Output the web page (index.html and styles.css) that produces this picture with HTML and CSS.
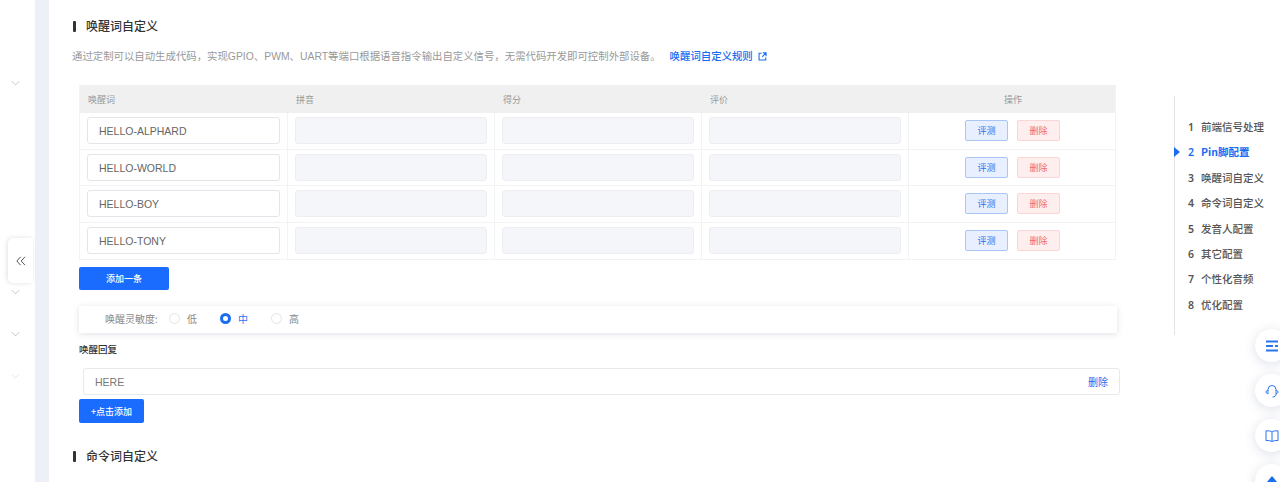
FILE: index.html
```html
<!DOCTYPE html>
<html lang="zh">
<head>
<meta charset="utf-8">
<title>唤醒词自定义</title>
<link rel="stylesheet" href="styles.css">
</head>
<body>
<div class="page">
  <aside class="sidebar">
    <svg class="chev chev-1" viewBox="0 0 8 5"><path d="M.6.8 4 4.2 7.4.8"/></svg>
    <svg class="chev chev-2" viewBox="0 0 8 5"><path d="M.6.8 4 4.2 7.4.8"/></svg>
    <svg class="chev chev-3" viewBox="0 0 8 5"><path d="M.6.8 4 4.2 7.4.8"/></svg>
    <svg class="chev chev-4" viewBox="0 0 8 5"><path d="M.6.8 4 4.2 7.4.8"/></svg>
  </aside>
  <div class="collapse-tab">
    <svg viewBox="0 0 10 10"><path d="M4.6.8.8 5l3.800 4.200M9 .8 5.200 5 9 9.200"/></svg>
  </div>
  <div class="strip"></div>
  <main class="content">
    <h2 class="heading">唤醒词自定义</h2>
    <p class="desc">通过定制可以自动生成代码，实现GPIO、PWM、UART等端口根据语音指令输出自定义信号，无需代码开发即可控制外部设备。<a class="rule-link">唤醒词自定义规则<svg viewBox="0 0 10 10"><path d="M4 1.400H1.200v7.400h7.400V6M5.400 1H9v3.600M9 1 4.600 5.400"/></svg></a></p>
    <div class="table">
      <div class="tr th">
        <div class="td">唤醒词</div><div class="td">拼音</div><div class="td">得分</div><div class="td">评价</div><div class="td ops-head">操作</div>
      </div>
      <div class="tr">
        <div class="td"><div class="input">HELLO-ALPHARD</div></div>
        <div class="td"><div class="input off"></div></div>
        <div class="td"><div class="input off"></div></div>
        <div class="td"><div class="input off"></div></div>
        <div class="td ops"><span class="btn test">评测</span><span class="btn del">删除</span></div>
      </div>
      <div class="tr">
        <div class="td"><div class="input">HELLO-WORLD</div></div>
        <div class="td"><div class="input off"></div></div>
        <div class="td"><div class="input off"></div></div>
        <div class="td"><div class="input off"></div></div>
        <div class="td ops"><span class="btn test">评测</span><span class="btn del">删除</span></div>
      </div>
      <div class="tr">
        <div class="td"><div class="input">HELLO-BOY</div></div>
        <div class="td"><div class="input off"></div></div>
        <div class="td"><div class="input off"></div></div>
        <div class="td"><div class="input off"></div></div>
        <div class="td ops"><span class="btn test">评测</span><span class="btn del">删除</span></div>
      </div>
      <div class="tr">
        <div class="td"><div class="input">HELLO-TONY</div></div>
        <div class="td"><div class="input off"></div></div>
        <div class="td"><div class="input off"></div></div>
        <div class="td"><div class="input off"></div></div>
        <div class="td ops"><span class="btn test">评测</span><span class="btn del">删除</span></div>
      </div>
    </div>
    <button class="primary add-row">添加一条</button>
    <div class="sens">
      <span class="sens-label">唤醒灵敏度:</span>
      <span class="radio"><i class="dot"></i>低</span>
      <span class="radio on"><i class="dot"></i>中</span>
      <span class="radio"><i class="dot"></i>高</span>
    </div>
    <div class="reply-title">唤醒回复</div>
    <div class="reply"><span>HERE</span><a>删除</a></div>
    <button class="primary add-reply">+点击添加</button>
    <h2 class="heading second">命令词自定义</h2>
  </main>
  <nav class="anchors">
    <div class="anchor"><b>1</b>前端信号处理</div>
    <div class="anchor active"><b>2</b>Pin脚配置</div>
    <div class="anchor"><b>3</b>唤醒词自定义</div>
    <div class="anchor"><b>4</b>命令词自定义</div>
    <div class="anchor"><b>5</b>发音人配置</div>
    <div class="anchor"><b>6</b>其它配置</div>
    <div class="anchor"><b>7</b>个性化音频</div>
    <div class="anchor"><b>8</b>优化配置</div>
  </nav>
  <div class="floats">
    <div class="fab"><svg viewBox="0 0 14 14"><path class="thick" d="M1 2.500h12M1 7h7M10 7h3M1 11.500h12"/></svg></div>
    <div class="fab"><svg viewBox="0 0 14 14"><path d="M3 6.500V5.500a4 4 0 0 1 8 0v1M3 6.200C1.600 6.500 1 7.200 1 8s.6 1.500 2 1.800zM11 6.200c1.400.3 2 1 2 1.800s-.6 1.500-2 1.800zM11 10c0 2-1.500 3-3.500 3"/></svg></div>
    <div class="fab"><svg viewBox="0 0 14 14"><path d="M7 3C6 2 4 1.800 1 1.800v9.700c3 0 5 .2 6 1.200 1-1 3-1.200 6-1.200V1.800C10 1.800 8 2 7 3zM7 3v9.700"/></svg></div>
    <div class="fab"><svg viewBox="0 0 14 14"><path class="fill" d="M7 2 12 8H2z"/></svg></div>
  </div>
</div>
</body>
</html>
```
FILE: styles.css
```css
* { box-sizing: border-box; }
html, body { margin: 0; padding: 0; background: #fff; }
body { font-family: "Noto Sans CJK SC", "Liberation Sans", sans-serif; color: #333; }
.page { display: flex; width: 1280px; height: 482px; overflow: hidden; position: relative; background: #fff; }

.sidebar { width: 35px; flex: none; display: flex; flex-direction: column; align-items: center; padding-right: 5px; }
.chev { width: 9px; height: 6px; fill: none; stroke: #b4b8c0; stroke-width: .7; display: block; }
.chev-1 { margin-top: 80px; }
.chev-2 { margin-top: 203px; }
.chev-3 { margin-top: 36px; }
.chev-4 { margin-top: 36px; opacity: .45; }
.collapse-tab { position: absolute; left: 8px; top: 238px; width: 25px; height: 45px; background: #fff; border-radius: 5px 0 0 5px; box-shadow: -1px 0 4px rgba(60, 70, 100, .16); display: flex; align-items: center; justify-content: center; }
.collapse-tab svg { width: 10px; height: 10px; fill: none; stroke: #555; stroke-width: 1; }
.strip { width: 14px; flex: none; background: #eef0f8; }

.content { width: 1125px; flex: none; padding: 0 0 0 24px; }
.heading { margin: 18px 0 0; height: 16px; font-size: 12px; line-height: 16px; font-weight: 500; color: #333; display: flex; align-items: center; }
.heading::before { content: ""; width: 3px; height: 11px; border-radius: 1px; background: #333; margin-right: 10px; }
.heading.second { margin-top: 25px; }
.desc { margin: 14px 0 0 -1px; height: 16px; font-size: 10.400px; line-height: 16px; color: #999; white-space: nowrap; font-family: "Liberation Sans", "Noto Sans CJK SC", sans-serif; }
.rule-link { color: #1a6cf0; font-weight: 500; margin-left: 9px; font-family: "Noto Sans CJK SC", sans-serif; }
.rule-link svg { width: 9px; height: 9px; margin-left: 5px; fill: none; stroke: #1a6cf0; stroke-width: 1.200; vertical-align: -1px; }

.table { margin: 21px 0 0 6px; width: 1037px; border: 1px solid #f2f3f5; border-top: 0; }
.tr { display: grid; grid-template-columns: 208px 207px 207px 207px 1fr; height: 36.500px; border-bottom: 1px solid #f2f3f5; }
.tr:last-child { border-bottom: 0; height: 36.500px; }
.tr.th { height: 28px; background: #f0f0f0; border-bottom: 0; font-size: 9px; color: #999; }
.td { display: flex; align-items: center; padding: 0 7px; border-right: 1px solid #f2f3f5; }
.td:last-child { border-right: 0; }
.th .td { border-right: 0; padding-left: 8px; }
.th .ops-head { justify-content: center; padding-left: 9px; }
.input { width: 193px; height: 27px; border: 1px solid #e3e5ea; border-radius: 3px; padding-left: 11px; font: 10.500px/27px "Liberation Sans", sans-serif; color: #666; background: #fff; }
.input.off { background: #f5f6f9; border-color: #eceef2; }
.ops { justify-content: center; gap: 9px; padding-right: 6px; }
.btn { width: 43px; height: 21px; border-radius: 2px; border: 1px solid; font-size: 9px; line-height: 19px; text-align: center; }
.btn.test { background: #e8f0ff; border-color: #a9c6f7; color: #2a74ef; }
.btn.del { background: #feeeee; border-color: #fbd5d5; color: #f06a6a; }

.primary { display: block; padding: 0; border: 0; border-radius: 2px; background: #1a6cff; color: #fff; font: 500 9px/23px "Noto Sans CJK SC", sans-serif; text-align: center; height: 24px; }
.add-row { width: 90px; height: 23px; margin: 7px 0 0 6px; }
.sens { margin: 16px 0 0 6px; width: 1038px; height: 27px; background: #fff; box-shadow: 0 1px 6px rgba(60, 70, 100, .16); display: flex; align-items: center; padding: 0 0 2px 26px; font-size: 10px; color: #888; }
.sens-label { width: 64px; }
.radio { display: flex; align-items: center; width: 51px; color: #888; }
.radio .dot { width: 11px; height: 11px; border: 1px solid #e2e4e8; border-radius: 50%; margin-right: 7px; background: #fff; }
.radio.on { color: #2a74ef; }
.radio.on .dot { border: 3px solid #1a6cf0; }
.reply-title { margin: 9px 0 0 6px; height: 14px; font-size: 9.500px; line-height: 14px; font-weight: 500; color: #333; }
.reply { margin: 12px 0 0 10px; width: 1037px; height: 27px; border: 1px solid #e8e9ed; border-radius: 3px; display: flex; align-items: center; justify-content: space-between; padding: 0 11px; font: 10.500px "Liberation Sans", sans-serif; color: #777; }
.reply a { font: 10px "Noto Sans CJK SC", sans-serif; color: #1a6cf0; }
.add-reply { width: 65px; margin: 4px 0 0 6px; }

.anchors { margin-top: 96px; height: 239px; width: 106px; flex: none; border-left: 1px solid #e4e4e4; padding: 23px 0 0 13px; font-size: 10.500px; color: #555; font-weight: 500; white-space: nowrap; position: relative; }
.anchor { height: 25.400px; line-height: 16px; display: flex; position: relative; }
.anchor b { width: 13px; font-family: "Noto Sans", sans-serif; font-weight: 600; }
.anchor.active { color: #1a6cf0; font-weight: 700; }
.anchor.active::before { content: ""; position: absolute; left: -14px; top: 3px; border-left: 6px solid #1a6cf0; border-top: 5px solid transparent; border-bottom: 5px solid transparent; }

.floats { position: absolute; left: 1255px; top: 329px; display: flex; flex-direction: column; gap: 12px; }
.fab { width: 33px; height: 33px; border-radius: 50%; background: #fff; box-shadow: 0 2px 12px rgba(60, 80, 130, .18); display: flex; align-items: center; justify-content: center; }
.fab svg { width: 14px; height: 14px; flex: none; fill: none; stroke: #2a74ef; stroke-width: 1; }
.fab .thick { stroke-width: 2; }
.fab .fill { fill: #1a6cf0; stroke: none; }
```
